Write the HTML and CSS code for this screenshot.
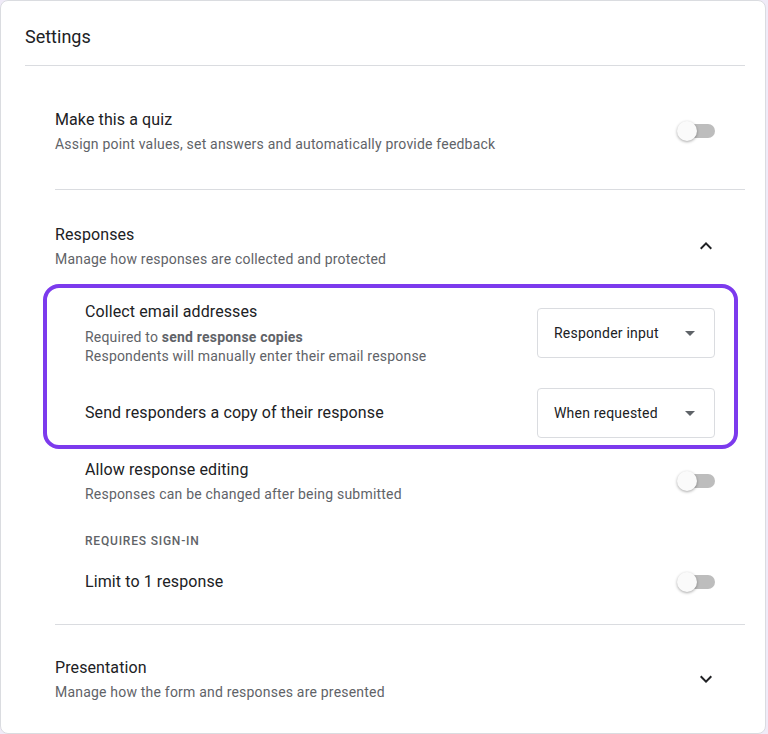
FILE: index.html
```html
<!DOCTYPE html>
<html lang="en">
<head>
  <meta charset="UTF-8" />
  <meta name="viewport" content="width=device-width, initial-scale=1.0"/>
  <title>Settings</title>
  <link rel="stylesheet" href="styles.css">
</head>
<body>
<div class="card">
  <div class="card-header">Settings</div>

  <div class="section quiz">
    <div class="row">
      <div>
        <div class="title">Make this a quiz</div>
        <div class="desc">Assign point values, set answers and automatically provide feedback</div>
      </div>
      <span class="switch"><span class="thumb"></span></span>
    </div>
  </div>

  <div class="section responses">
    <div class="row">
      <div>
        <div class="title">Responses</div>
        <div class="desc">Manage how responses are collected and protected</div>
      </div>
      <svg class="chevron" width="24" height="24" viewBox="0 0 24 24"><path d="M12 8l-6 6 1.41 1.41L12 10.83l4.59 4.58L18 14z"/></svg>
    </div>

    <div class="highlight">
      <div class="sub-row">
        <div>
          <div class="title">Collect email addresses</div>
          <div class="desc two-line">Required to <b>send response copies</b><br>Respondents will manually enter their email response</div>
        </div>
        <div class="select">
          <span>Responder input</span>
          <svg width="24" height="24" viewBox="0 0 24 24"><path d="M7 10l5 5 5-5z"/></svg>
        </div>
      </div>
      <div class="sub-row">
        <div class="title">Send responders a copy of their response</div>
        <div class="select">
          <span>When requested</span>
          <svg width="24" height="24" viewBox="0 0 24 24"><path d="M7 10l5 5 5-5z"/></svg>
        </div>
      </div>
    </div>

    <div class="sub-row">
      <div>
        <div class="title">Allow response editing</div>
        <div class="desc">Responses can be changed after being submitted</div>
      </div>
      <span class="switch"><span class="thumb"></span></span>
    </div>

    <div class="label">Requires sign-in</div>

    <div class="sub-row">
      <div class="title">Limit to 1 response</div>
      <span class="switch"><span class="thumb"></span></span>
    </div>
  </div>

  <div class="section presentation">
    <div class="row">
      <div>
        <div class="title">Presentation</div>
        <div class="desc">Manage how the form and responses are presented</div>
      </div>
      <svg class="chevron" width="24" height="24" viewBox="0 0 24 24"><path d="M16.59 8.59L12 13.17 7.41 8.59 6 10l6 6 6-6z"/></svg>
    </div>
  </div>
</div>
</body>
</html>
```

FILE: styles.css
```css
body { margin: 0; background: #f0ebf8; font-family: Roboto, "Noto Sans", Arial, sans-serif; color: #202124; }
.card { background: #fff; border: 1px solid #dadce0; border-radius: 8px; margin-right: 2px; padding: 0 20px 0 24px; }
.card-header { font-size: 18px; line-height: 24px; padding: 24px 0 16px; border-bottom: 1px solid #dadce0; }

.section { margin-left: 30px; border-bottom: 1px solid #dadce0; }
.section.quiz { padding: 42px 0 35px; }
.section.responses { padding: 33px 0 30px; }
.section.presentation { padding: 31px 0; border-bottom: none; }

.row, .sub-row { display: flex; align-items: center; justify-content: space-between; gap: 16px; }
.row { padding-right: 30px; }
.sub-row { padding: 0 30px; }

.title { font-size: 16px; line-height: 24px; letter-spacing: 0.1px; color: #202124; }
.desc { font-size: 14px; line-height: 20px; letter-spacing: 0.2px; color: #5f6368; margin-top: 2px; }
.desc.two-line { margin-top: 4px; line-height: 19px; }
.desc b { font-weight: 700; }

.chevron { fill: #202124; margin-right: -3px; }

.highlight { margin: 15px 7px 9px -12px; border: 4px solid #7c3aed; border-radius: 16px; padding: 12px 19px 7px 38px; }
.highlight .sub-row { padding: 0; }
.highlight .sub-row + .sub-row { margin-top: 22px; }

.select { width: 178px; height: 50px; box-sizing: border-box; border: 1px solid #dadce0; border-radius: 4px; display: flex; align-items: center; justify-content: space-between; padding: 0 12px 0 16px; font-size: 14px; letter-spacing: 0.2px; color: #202124; flex-shrink: 0; }
.select svg { fill: #5f6368; }

.label { font-size: 12px; line-height: 16px; font-weight: 500; letter-spacing: 0.8px; text-transform: uppercase; color: #5f6368; margin: 29px 30px 21px; }

.switch { position: relative; width: 38px; height: 20px; flex-shrink: 0; }
.switch::before { content: ""; position: absolute; left: 4px; top: 3px; width: 34px; height: 14px; border-radius: 7px; background: #bdbdbd; }
.switch .thumb { position: absolute; left: 0; top: 0; width: 20px; height: 20px; border-radius: 50%; background: #fafafa; box-shadow: 0 1px 3px rgba(0,0,0,0.35); }
```
